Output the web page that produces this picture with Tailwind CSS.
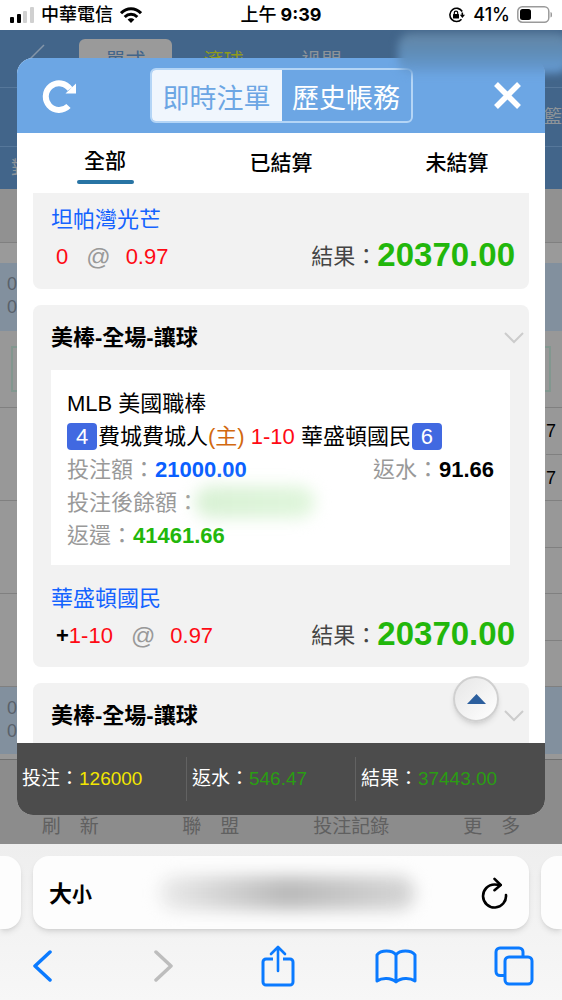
<!DOCTYPE html>
<html lang="zh-Hant">

<head>
  <meta charset="UTF-8">
  <meta name="viewport" content="width=device-width, initial-scale=1.0">
  <title>即時注單</title>
  <script src="https://cdn.jsdelivr.net/npm/@tailwindcss/browser@4"></script>
</head>

<body class="bg-white font-['Liberation_Sans','Noto_Sans_CJK_TC',sans-serif] text-black">
  <div class="h-screen flex flex-col overflow-hidden">

    <!-- Status bar -->
    <header class="h-[30px] shrink-0 grid grid-cols-3 items-center px-[10px] text-[18px] leading-[24px] font-medium font-['Inter','Noto_Sans_CJK_TC',sans-serif]">
      <div class="flex items-center gap-[7px]">
        <svg class="w-6 h-4" viewBox="0 0 24 16">
          <rect x="0" y="10" width="4" height="6" rx="1" />
          <rect x="7" y="7" width="4" height="9" rx="1" />
          <rect x="13" y="4" width="4" height="12" rx="1" fill="#d0d0d0" />
          <rect x="20" y="0" width="4" height="16" rx="1" fill="#d0d0d0" />
        </svg>
        <span>中華電信</span>
        <svg class="w-[22px] h-4" viewBox="0 0 22 16" fill="none" stroke="#000" stroke-width="3">
          <path d="M1 6.2C6.800 .3 15.200 .3 21 6.200" />
          <path d="M4.700 10C8.300 6.400 13.700 6.400 17.300 10" />
          <path d="M7.600 12.500C9.500 10.700 12.500 10.700 14.400 12.500L11 16Z" fill="#000" stroke="none" />
        </svg>
      </div>
      <div class="text-center whitespace-nowrap">上午<span class="ml-1 font-bold">9:39</span></div>
      <div class="flex items-center justify-end gap-[7px]">
        <svg class="w-[18px] h-4" viewBox="0 0 18 16" fill="none" stroke="#000" stroke-width="1.600">
          <path d="M14.200 4.500A6.600 6.600 0 1 0 13.500 12.200" />
          <path d="M14.300 5.500V8.500" />
          <path d="M11.800 7.800H17L14.400 11Z" fill="#000" stroke="none" />
          <rect x="5" y="7" width="6" height="4.500" rx=".6" fill="#000" stroke="none" />
          <path d="M6.300 7.500V5.800a1.700 1.700 0 0 1 3.400 0V7.500" stroke-width="1.200" />
        </svg>
        <span>41%</span>
        <svg class="w-[35px] h-[18px]" viewBox="0 0 35 18">
          <rect x=".8" y=".8" width="31" height="15.400" rx="4.500" fill="none" stroke="#9a9a9a" stroke-width="1.500" />
          <rect x="3" y="3" width="11" height="11" rx="2.500" />
          <path d="M33.500 6a3 3 0 0 1 0 5.500Z" fill="#9a9a9a" />
        </svg>
      </div>
    </header>

    <!-- Web page -->
    <main class="relative flex-1 min-h-0 flex flex-col px-[17px] pt-7 pb-[29px] overflow-hidden">

      <!-- Dimmed page behind the dialog -->
      <div class="absolute inset-0 flex flex-col bg-[#989898] text-[#59616a] text-[18px] overflow-hidden">
        <div class="bg-[#42658a] text-[20px] text-[#8e9499]">
          <div class="h-[58px] flex gap-[5px] pl-[27px] border-b border-[#56779a]">
            <svg class="w-[47px] h-[40px] mt-[14px]" viewBox="0 0 47 40" fill="none" stroke="#8496a8" stroke-width="1.500">
              <path d="M17 1L0 18L17 35" />
            </svg>
            <span class="w-[93px] mt-[9px] pt-[10px] rounded-t-[6px] bg-[#9a9a9a] text-[#42658a] text-center leading-[24px]">單式</span>
            <span class="w-[93px] mt-[19px] text-[#8f9a1c] text-center leading-[24px]">滾球</span>
            <span class="w-[93px] mt-[19px] text-center leading-[24px]">過關</span>
          </div>
          <div class="h-[59px] flex items-center justify-end border-b border-[#56779a] text-[18px]">籃</div>
          <div class="h-[42px] flex items-center pl-[11px] text-[18px]">對</div>
        </div>
        <div class="h-[54px] bg-[#919191] border-b border-[#808080]"></div>
        <div class="h-5 bg-[#9a9a9a]"></div>
        <div class="h-[68px] bg-[#82909e] pl-[7px] pt-[10px] leading-[23px]">0<br>0</div>
        <div class="h-[77px] px-[11px] pt-[15px] border-b border-[#808080]">
          <div class="h-[46px] border-2 border-[#82978f]"></div>
        </div>
        <div class="h-[93px] flex border-b border-[#808080] text-black">
          <div class="flex-1"></div>
          <div class="w-[20px] flex flex-col pl-[4px] leading-[46px]"><span class="h-[47px] border-b border-[#808080]">7</span><span>7</span></div>
        </div>
        <div class="h-[93px] flex justify-end border-b border-[#808080]">
          <div class="w-[20px] h-[47px] border-b border-[#808080]"></div>
        </div>
        <div class="h-[93px] flex justify-end border-b border-[#808080]">
          <div class="w-[20px] h-[47px] border-b border-[#808080]"></div>
        </div>
        <div class="h-[67px] bg-[#82909e] pl-[7px] pt-[10px] leading-[23px]">0<br>0</div>
        <nav class="flex-1 mt-[5px] grid grid-cols-4 items-end pb-[7px] bg-[#8c8c8c] border-t border-[#707070] text-[19px] leading-[20px] text-[#606060] text-center">
          <a href="#">刷　新</a>
          <a href="#">聯　盟</a>
          <a href="#">投注記錄</a>
          <a href="#">更　多</a>
        </nav>
      </div>

      <!-- Dialog -->
      <section class="relative flex-1 min-h-0 flex flex-col rounded-[16px] bg-white overflow-hidden">
        <div class="h-[75px] shrink-0 flex items-center justify-between px-6 bg-[#6ca6e4]">
          <button type="button" aria-label="重新整理" class="w-[35px] flex justify-end">
            <svg class="w-[34px] h-[34px]" viewBox="0 0 34 34" fill="none" stroke="#fff" stroke-width="6">
              <path d="M26.500 27A13.300 13.300 0 1 1 28 10" />
              <path d="M34 4.500V14.500H23.500Z" fill="#fff" stroke="none" />
            </svg>
          </button>
          <div class="h-[55px] flex rounded-[6px] border-2 border-[#b4d5f6] overflow-hidden text-[27px] leading-[59px]">
            <button type="button" class="w-[130px] bg-[#f0f6fd] text-[#6ca6e4]">即時注單</button>
            <button type="button" class="w-[129px] text-white">歷史帳務</button>
          </div>
          <button type="button" aria-label="關閉" class="w-[35px] flex justify-end">
            <svg class="w-[27px] h-[27px]" viewBox="0 0 27 27" stroke="#fff" stroke-width="5.500">
              <path d="M2 2L25 25M25 2L2 25" />
            </svg>
          </button>
        </div>

        <div class="h-[60px] shrink-0 grid grid-cols-3 text-[21px] leading-[28px] font-medium">
          <button type="button" class="flex flex-col items-center pt-[14px]">全部<span class="mt-[5px] w-[57px] h-1 rounded-full bg-[#2874a4]"></span></button>
          <button type="button">已結算</button>
          <button type="button">未結算</button>
        </div>

        <div class="relative flex-1 min-h-0 px-4 flex flex-col gap-4 overflow-hidden text-[22px]">
          <article class="shrink-0 rounded-b-[8px] bg-[#f2f2f2] pl-[18px] pr-[14px] pt-2 pb-[14px] leading-[37px]">
            <p class="text-[#1463ff]">坦帕灣光芒</p>
            <div class="flex justify-between pl-[5px]">
              <div class="flex text-[#ff0a14]"><span>0</span><span class="ml-[18px] mr-[15px] text-[24px] text-[#999]">@</span><span>0.97</span></div>
              <p class="flex text-[#444]">結果：<strong class="text-[33px] leading-[33px] text-[#22b70b]">20370.00</strong></p>
            </div>
          </article>

          <article class="shrink-0 rounded-[8px] bg-[#f2f2f2] pb-[13px]">
            <div class="h-[65px] flex items-center justify-between pl-[18px] pr-[5px]">
              <h2 class="font-bold leading-[33px]">美棒-全場-讓球</h2>
              <svg class="w-5 h-3" viewBox="0 0 20 12" fill="none" stroke="#ccc" stroke-width="2"><path d="M1 1L10 10L19 1" /></svg>
            </div>
            <div class="ml-[18px] mr-[19px] px-4 pt-[17px] pb-[13px] bg-white leading-[33px] text-[#999]">
              <p class="text-black">MLB 美國職棒</p>
              <p class="flex items-center whitespace-nowrap text-black">
                <span class="w-[30px] h-[27px] rounded-[4px] bg-[#4169e1] text-white text-center leading-[27px]">4</span>
                <span class="px-px">費城費城人<span class="text-[#d2690f]">(主)</span> <span class="text-[#ff0a14]">1-10</span> 華盛頓國民</span>
                <span class="w-[30px] h-[27px] rounded-[4px] bg-[#4169e1] text-white text-center leading-[27px]">6</span>
              </p>
              <div class="flex justify-between">
                <p>投注額：<strong class="text-[#0a5fff]">21000.00</strong></p>
                <p>返水：<strong class="text-black">91.66</strong></p>
              </div>
              <div class="flex">
                <span>投注後餘額：</span>
                <span class="-ml-1 w-[120px] h-[32px] rounded-full bg-linear-to-r from-[#d8f1d4] to-[#e0f6dc] blur-[8px]"></span>
              </div>
              <p>返還：<strong class="text-[#22b70b]">41461.66</strong></p>
            </div>
            <div class="pl-[18px] pr-[14px] pt-[15px] leading-[37px]">
              <p class="text-[#1463ff]">華盛頓國民</p>
              <div class="flex justify-between pl-[5px]">
                <div class="flex text-[#ff0a14]"><span><b class="text-black">+</b>1-10</span><span class="ml-[18px] mr-[15px] text-[24px] text-[#999]">@</span><span>0.97</span></div>
                <p class="flex text-[#444]">結果：<strong class="text-[33px] leading-[33px] text-[#22b70b]">20370.00</strong></p>
              </div>
            </div>
          </article>

          <article class="shrink-0 rounded-t-[8px] bg-[#f2f2f2]">
            <div class="h-[65px] flex items-center justify-between pl-[18px] pr-[5px]">
              <h2 class="font-bold leading-[33px]">美棒-全場-讓球</h2>
              <svg class="w-5 h-3" viewBox="0 0 20 12" fill="none" stroke="#ccc" stroke-width="2"><path d="M1 1L10 10L19 1" /></svg>
            </div>
          </article>

          <!-- Back to top -->
          <button type="button" aria-label="回到頂端" class="absolute right-[46px] bottom-[21px] w-[46px] h-[46px] rounded-full border-2 border-[#d0d0d0] bg-linear-to-br from-[#e6e6e6] to-white shadow-md flex items-center justify-center">
            <svg class="w-[19px] h-[10px]" viewBox="0 0 19 10"><path d="M9.500 0L19 10H0Z" fill="#2c5f9e" /></svg>
          </button>
        </div>

        <!-- Totals -->
        <footer class="h-[72px] shrink-0 flex items-center bg-[#4c4c4c] text-white text-[19px] leading-[44px] whitespace-nowrap">
          <div class="w-[32%] pl-[5px]">投注：<span class="text-[#f2e600]">126000</span></div>
          <div class="w-[32%] pl-[5px] border-l border-[#626262]">返水：<span class="text-[#2a9d12]">546.47</span></div>
          <div class="flex-1 pl-[5px] border-l border-[#626262]">結果：<span class="text-[#2a9d12]">37443.00</span></div>
        </footer>
      </section>

      <!-- Smudge over the account name -->
      <div class="absolute -right-2 top-[3px] w-[172px] h-[40px] rounded-[14px] bg-linear-to-b from-[#6485a3] via-[#5f8db8] to-[#679dd6] blur-[4px]"></div>
    </main>

    <!-- Browser toolbar -->
    <footer class="relative shrink-0 h-[156px] pt-3 bg-linear-to-b from-[#eeeeee] to-[#f7f7f7] overflow-hidden">
      <div class="flex gap-3 h-[73px]">
        <div class="w-[21px] rounded-r-[16px] bg-[#fdfdfd] shadow-md"></div>
        <div class="flex-1 flex items-center justify-between pl-4 pr-[21px] rounded-[16px] bg-[#fdfdfd] shadow-md">
          <button type="button" class="text-[23px] leading-[30px] pt-1 font-bold flex items-baseline">大<span class="text-[20px]">小</span></button>
          <div class="w-[256px] h-[34px] rounded-[16px] bg-linear-to-r from-[#ececec] via-[#bababa] to-[#d6d6d6] blur-[8px]"></div>
          <button type="button" aria-label="重新載入">
            <svg class="w-[27px] h-[32px]" viewBox="0 0 27 32" fill="none" stroke="#000" stroke-width="2.600" stroke-linecap="round" stroke-linejoin="round">
              <path d="M25 18A11.500 11.500 0 1 1 13.500 7.500C16 7.500 17.500 7.600 19.500 8" />
              <path d="M13.500 1.800L19.700 8L13.500 13.200" />
            </svg>
          </button>
        </div>
        <div class="w-[21px] rounded-l-[16px] bg-[#fdfdfd] shadow-md"></div>
      </div>
      <nav class="flex justify-between items-center h-[74px] pl-[23px] pr-7">
        <button type="button" aria-label="上一頁" class="w-10 flex justify-center">
          <svg class="w-5 h-8" viewBox="0 0 20 32" fill="none" stroke="#0a7aff" stroke-width="3.500" stroke-linecap="round" stroke-linejoin="round"><path d="M17 2L2 16L17 30" /></svg>
        </button>
        <button type="button" aria-label="下一頁" class="w-10 flex justify-end">
          <svg class="w-7 h-8" viewBox="0 0 28 32" fill="none" stroke="#bdbdbd" stroke-width="3.500" stroke-linecap="round" stroke-linejoin="round"><path d="M4 2L19 16L4 30" /></svg>
        </button>
        <button type="button" aria-label="分享" class="w-10 flex justify-center">
          <svg class="w-[34px] h-[42px]" viewBox="0 0 34 42" fill="none" stroke="#0a7aff" stroke-width="3" stroke-linecap="round" stroke-linejoin="round">
            <path d="M12 14H5A3 3 0 0 0 2 17V37A3 3 0 0 0 5 40H29A3 3 0 0 0 32 37V17A3 3 0 0 0 29 14H22" stroke-linecap="butt" />
            <path d="M17 26V2M10 9L17 2L24 9" stroke-width="2.600" />
          </svg>
        </button>
        <button type="button" aria-label="書籤" class="w-[42px] flex justify-center">
          <svg class="w-[42px] h-[35px]" viewBox="0 0 42 35" fill="none" stroke="#0a7aff" stroke-width="3" stroke-linecap="round" stroke-linejoin="round">
            <path d="M21 6C17 .8 6 .8 2 6V32C7 28.500 16 28.500 21 33C26 28.500 35 28.500 40 32V6C36 .8 25 .8 21 6V32" />
          </svg>
        </button>
        <button type="button" aria-label="分頁" class="w-10 flex justify-center">
          <svg class="w-10 h-10" viewBox="0 0 40 40" fill="none" stroke="#0a7aff" stroke-width="3">
            <path d="M10.500 29.500H6A4 4 0 0 1 2 25.500V6A4 4 0 0 1 6 2H25A4 4 0 0 1 29 6V10.500" />
            <rect x="11" y="11" width="27" height="27" rx="4" />
          </svg>
        </button>
      </nav>
    </footer>
  </div>
</body>

</html>
